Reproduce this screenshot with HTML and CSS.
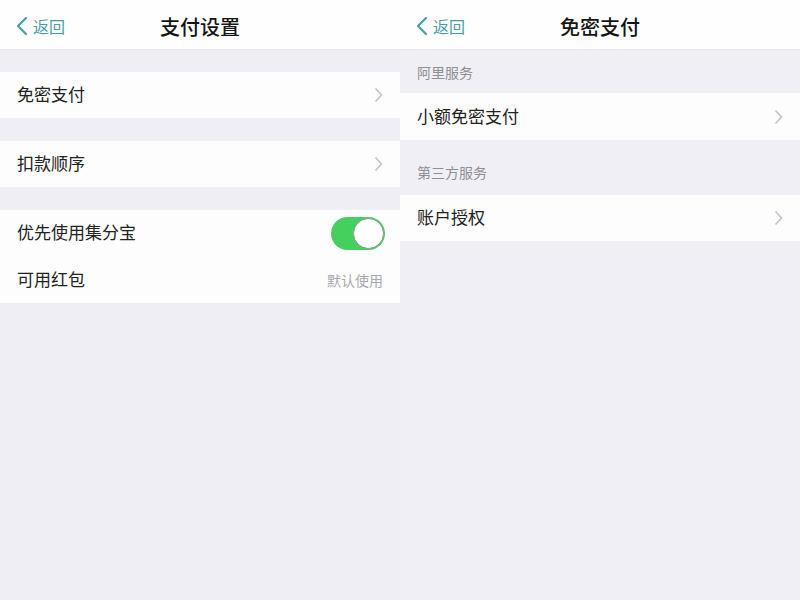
FILE: index.html
```html
<!DOCTYPE html>
<html lang="zh">
<head>
<meta charset="utf-8">
<link rel="stylesheet" href="styles.css">
</head>
<body>
<div class="screen">
  <div class="panel">
    <div class="nav">
      <div class="back">
        <svg class="back-icon" width="12" height="20" viewBox="0 0 12 20"><path d="M10 2 L2 10 L10 18" fill="none" stroke="#4a9ea6" stroke-width="2.2" stroke-linecap="round" stroke-linejoin="round"/></svg>
        <span>返回</span>
      </div>
      <div class="title">支付设置</div>
    </div>
    <div class="group g1">
      <div class="row"><span>免密支付</span><svg class="chev" width="9" height="16" viewBox="0 0 9 16"><path d="M1.5 1.5 L7.5 8 L1.5 14.5" fill="none" stroke="#c4c4ca" stroke-width="1.6"/></svg></div>
    </div>
    <div class="group g2">
      <div class="row"><span>扣款顺序</span><svg class="chev" width="9" height="16" viewBox="0 0 9 16"><path d="M1.5 1.5 L7.5 8 L1.5 14.5" fill="none" stroke="#c4c4ca" stroke-width="1.6"/></svg></div>
    </div>
    <div class="group g3">
      <div class="row"><span>优先使用集分宝</span><div class="toggle"><div class="knob"></div></div></div>
      <div class="row tall"><span>可用红包</span><span class="value">默认使用</span></div>
    </div>
  </div>
  <div class="panel right">
    <div class="nav">
      <div class="back">
        <svg class="back-icon" width="12" height="20" viewBox="0 0 12 20"><path d="M10 2 L2 10 L10 18" fill="none" stroke="#4a9ea6" stroke-width="2.2" stroke-linecap="round" stroke-linejoin="round"/></svg>
        <span>返回</span>
      </div>
      <div class="title">免密支付</div>
    </div>
    <div class="section-label first">阿里服务</div>
    <div class="group">
      <div class="row tall"><span>小额免密支付</span><svg class="chev" width="9" height="16" viewBox="0 0 9 16"><path d="M1.5 1.5 L7.5 8 L1.5 14.5" fill="none" stroke="#c4c4ca" stroke-width="1.6"/></svg></div>
    </div>
    <div class="section-label second">第三方服务</div>
    <div class="group">
      <div class="row"><span>账户授权</span><svg class="chev" width="9" height="16" viewBox="0 0 9 16"><path d="M1.5 1.5 L7.5 8 L1.5 14.5" fill="none" stroke="#c4c4ca" stroke-width="1.6"/></svg></div>
    </div>
  </div>
</div>
</body>
</html>
```
FILE: styles.css
```css
html, body {
  margin: 0;
  padding: 0;
}
body {
  width: 800px;
  height: 600px;
  overflow: hidden;
  font-family: "Noto Sans CJK SC", "Noto Sans", sans-serif;
  background: #efeef4;
}
.screen {
  display: flex;
  height: 600px;
}
.panel {
  width: 400px;
  height: 600px;
  background: #efeef4;
}
.panel.right {
  background: #f0eff5;
}
.nav {
  height: 50px;
  background: #fefefe;
  border-bottom: 1px solid #e6e6ec;
  box-sizing: border-box;
  display: flex;
  align-items: center;
  justify-content: center;
  position: relative;
}
.back {
  position: absolute;
  left: 16px;
  top: 0;
  height: 50px;
  display: flex;
  align-items: center;
  gap: 5px;
  color: #4a9ea6;
  font-size: 16px;
  padding-top: 2px;
  box-sizing: border-box;
}
.title {
  font-size: 20px;
  font-weight: 500;
  color: #151515;
  padding-top: 4px;
}
.group {
  background: #fdfdfd;
}
.g1 { margin-top: 22px; }
.g2 { margin-top: 23px; }
.g3 { margin-top: 23px; }
.row {
  height: 46px;
  display: flex;
  align-items: center;
  justify-content: space-between;
  padding: 0 15px 3px 17px;
  box-sizing: border-box;
  font-size: 17px;
  color: #222;
}
.row.tall {
  height: 47px;
}
.chev {
  margin-right: 2px;
  margin-top: 3px;
}
.toggle {
  margin-top: 3px;
}
.value {
  font-size: 14px;
  color: #a8a8ac;
  margin-right: 2px;
  margin-top: 3px;
}
.toggle {
  width: 54px;
  height: 33px;
  border-radius: 17px;
  background: #45cf5e;
  position: relative;
}
.knob {
  position: absolute;
  right: 1px;
  top: 1px;
  width: 29px;
  height: 29px;
  border-radius: 50%;
  background: #fff;
  border: 1px solid #8a9a8e;
}
.section-label {
  font-size: 14px;
  color: #8e8e93;
  line-height: 20px;
  padding: 12px 17px 11px;
}
.section-label.second {
  padding: 22px 17px 13px;
}
```
